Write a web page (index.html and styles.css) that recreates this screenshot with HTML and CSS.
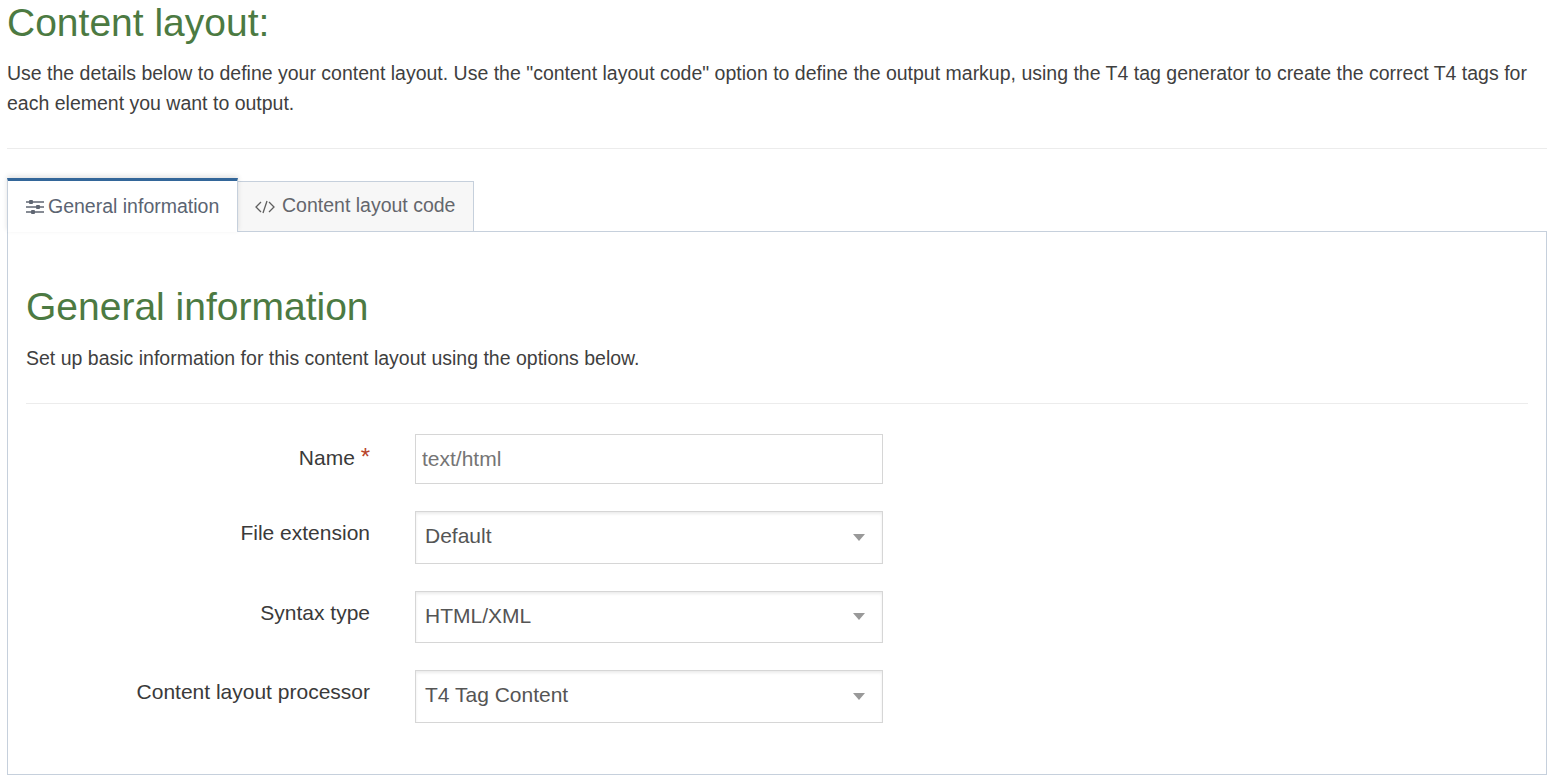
FILE: index.html
```html
<!DOCTYPE html>
<html lang="en">
<head>
<meta charset="utf-8">
<title>Content layout</title>
<link rel="stylesheet" href="styles.css">
</head>
<body>
<main class="page">
  <h1 class="page-title">Content layout:</h1>
  <p class="lead">Use the details below to define your content layout. Use the "content layout code" option to define the output markup, using the T4 tag generator to create the correct T4 tags for each element you want to output.</p>
  <hr class="rule page-rule">
  <nav class="tabs">
    <a class="tab active">
      <svg class="icon" viewBox="0 0 18 16" width="18" height="16" aria-hidden="true">
        <path d="M0 3h18M0 8h18M0 13h18" stroke="#5f6672" stroke-width="1.4" fill="none"/>
        <rect x="3" y="1" width="4" height="4" rx="1" fill="#5f6672"/>
        <rect x="10" y="6" width="4" height="4" rx="1" fill="#5f6672"/>
        <rect x="5" y="11" width="4" height="4" rx="1" fill="#5f6672"/>
      </svg><span>General information</span></a>
    <a class="tab">
      <svg class="icon code" viewBox="0 0 20 16" width="20" height="16" aria-hidden="true">
        <path d="M6 3 1 8l5 5M14 3l5 5-5 5M12 2 8 14" stroke="#5f5f5f" stroke-width="1.3" fill="none"/>
      </svg><span class="tab-text">Content layout code</span></a>
  </nav>
  <section class="panel">
    <h2 class="panel-title">General information</h2>
    <p class="panel-lead">Set up basic information for this content layout using the options below.</p>
    <hr class="rule panel-rule">
    <form class="form">
      <div class="row row-name">
        <label class="label">Name <span class="req">*</span></label>
        <input class="input" type="text" placeholder="text/html">
      </div>
      <div class="row">
        <label class="label">File extension</label>
        <div class="select"><span>Default</span><i class="caret"></i></div>
      </div>
      <div class="row">
        <label class="label">Syntax type</label>
        <div class="select"><span>HTML/XML</span><i class="caret"></i></div>
      </div>
      <div class="row">
        <label class="label">Content layout processor</label>
        <div class="select"><span>T4 Tag Content</span><i class="caret"></i></div>
      </div>
    </form>
  </section>
</main>
</body>
</html>
```
FILE: styles.css
```css
* { box-sizing: border-box; }
html, body { margin: 0; padding: 0; background: #fff; }
body { font-family: "Liberation Sans", Arial, sans-serif; color: #3c3c3c; overflow: hidden; }
.page { width: 1553px; height: 781px; padding: 0 6px 0 7px; }
.page-title { margin: 0; font-size: 39px; font-weight: 400; line-height: 45px; color: #4c7a42; }
.lead { margin: 13px 0 0; font-size: 19.5px; line-height: 30px; color: #3f3f3f; }
.rule { border: 0; border-top: 1px solid #ececec; margin: 0; }
.page-rule { margin-top: 30px; }
.tabs { display: flex; align-items: flex-end; height: 83px; position: relative; margin-bottom: -1px; }
.tab { display: flex; align-items: center; height: 51px; width: 236px; padding: 0 17px; font-size: 19.5px; white-space: nowrap; color: #64666c; background: #f7f7f7; border: 1px solid #c6d0dc; border-left: 0; }
.tab-text { margin: -2px 0 0 2px; }
.tab.active { height: 54px; width: 231px; padding: 0 18px; background: #fff; color: #5b6472; border: 0; border-top: 3px solid #336699; border-right: 1px solid #c6d0dc; border-left: 1px solid #c6d0dc; box-shadow: 0 -2px 5px rgba(0,0,0,.12); z-index: 1; position: relative; }
.tab.active .icon { margin-right: 4px; }
.icon { margin-right: 5px; flex: none; }
.panel { height: 544px; border: 1px solid #c6d0dc; padding: 51px 18px 0; }
.panel-title { margin: 0; font-size: 39px; font-weight: 400; line-height: 48px; color: #4c7a42; }
.panel-lead { margin: 14px 0 0; font-size: 19.5px; line-height: 26px; color: #3f3f3f; }
.panel-rule { margin-top: 32px; }
.form { display: flex; flex-direction: column; gap: 27px; padding-top: 30px; }
.row { display: flex; align-items: flex-start; }
.label { width: 344px; text-align: right; font-size: 21px; line-height: 26px; padding-top: 9px; color: #3a3a3a; flex: none; }
.row-name .label { padding-top: 11px; }
.req { color: #b8442c; font-size: 24px; line-height: 20px; }
.input, .select { margin-left: 45px; width: 468px; border: 1px solid #d6d6d6; background: #fff; font-family: inherit; }
.input { height: 50px; padding: 0 6px; font-size: 21px; color: #666; }
.input::placeholder { color: #757575; opacity: 1; }
.select { height: 52.6px; padding: 0 17.5px 2px 9px; display: flex; align-items: center; justify-content: space-between; font-size: 21px; color: #555; box-shadow: inset 0 2px 3px rgba(0,0,0,.08); }
.caret { width: 0; height: 0; margin-top: 2px; border-left: 6px solid transparent; border-right: 6px solid transparent; border-top: 7px solid #999; }
```
